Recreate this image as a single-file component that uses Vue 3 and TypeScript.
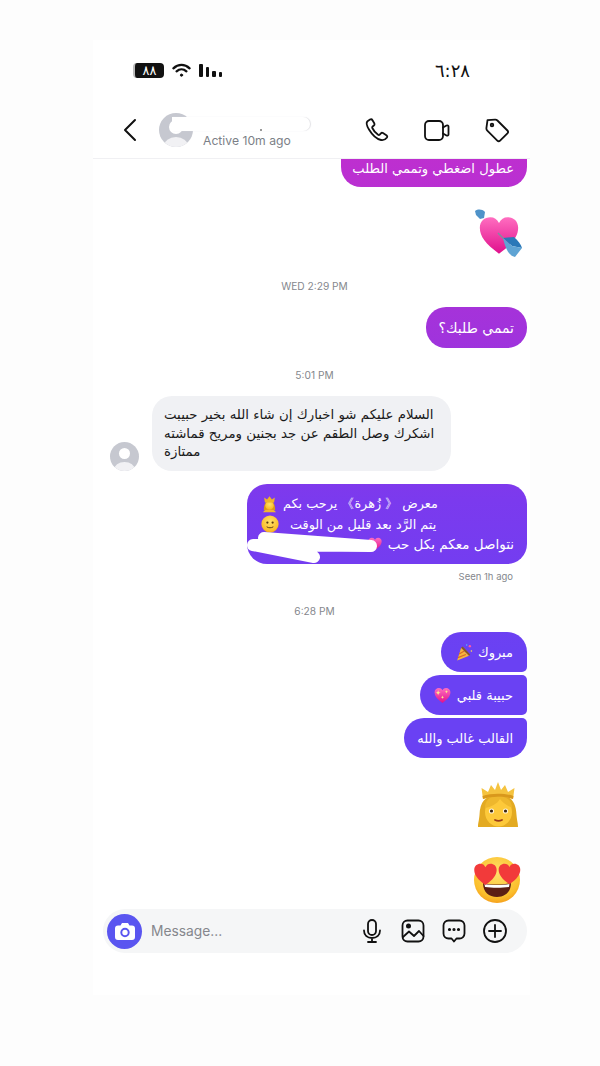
<script setup lang="ts">
const actions = ['call', 'video', 'tag']
const inputIcons = ['mic', 'image', 'chat', 'plus']
const heartPath = 'M24 43C10 33 4 25 4 16 4 9 9 5 15 5c4 0 7 2 9 6 2-4 5-6 9-6 6 0 11 4 11 11 0 9-6 17-20 27z'
</script>

<template>
  <div class="page">
    <svg class="defs" width="0" height="0">
      <defs>
        <linearGradient id="pink" x1="0" y1="0" x2="0" y2="1">
          <stop offset="0" stop-color="#ff6ec0" />
          <stop offset="1" stop-color="#e0108c" />
        </linearGradient>
        <radialGradient id="skin" cx="0.5" cy="0.35" r="0.75">
          <stop offset="0" stop-color="#ffe16a" />
          <stop offset="0.7" stop-color="#fbbf2c" />
          <stop offset="1" stop-color="#f28a12" />
        </radialGradient>
        <symbol id="heart" viewBox="0 0 48 48">
          <path :d="heartPath" fill="url(#pink)" />
        </symbol>
        <symbol id="face" viewBox="0 0 48 48">
          <circle cx="24" cy="24" r="23" fill="url(#skin)" />
        </symbol>
      </defs>
    </svg>

    <div class="screen">
      <div class="status">
        <div class="status-icons">
          <span class="battery">٨٨</span>
          <svg width="19" height="15" viewBox="0 0 20 15" fill="none" stroke="#111" stroke-width="2.4" stroke-linecap="round">
            <path d="M1.5 5.2c5-4.8 12-4.8 17 0" />
            <path d="M4.8 8.400c3-2.700 7.400-2.700 10.400 0" />
            <circle cx="10" cy="12.400" r="1.200" fill="#111" stroke-width="1" />
          </svg>
          <div class="signal"><i class="s1"></i><i class="s2"></i><i class="s3"></i><i class="s4"></i></div>
        </div>
        <span class="clock">٦:٢٨</span>
      </div>

      <header class="head">
        <svg class="back" width="16" height="24" viewBox="0 0 16 24" fill="none" stroke="#111" stroke-width="2" stroke-linecap="round" stroke-linejoin="round">
          <path d="M13 2 3 12l10 10" />
        </svg>
        <div class="who">
          <div class="avatar big"><i></i><b></b></div>
          <div class="name">
            <div class="scribble"></div>
            <div class="active">Active 10m ago</div>
          </div>
        </div>
        <div class="actions">
          <svg v-for="a in actions" :key="a" width="26" height="26" viewBox="0 0 26 26" fill="none" stroke="#111" stroke-width="1.800" stroke-linecap="round" stroke-linejoin="round">
            <path v-if="a === 'call'" d="M6 2.500 3.500 4.200C2 5.500 2.600 8.500 5 12.500c3 5 7.500 9.500 12 10.500 2.500.5 4.500-.5 6-2.500.5-.8.300-1.500-.3-2l-3.700-2.400c-.8-.5-1.500-.4-2.100.2l-1.200 1.400c-.5.500-1 .5-1.600.1-2.500-1.700-4.500-4-5.800-6.800-.3-.6-.2-1.100.3-1.500l1.300-1c.6-.5.8-1.200.5-2L8.500 3.200C8 2.300 7 2 6 2.500z" />
            <template v-else-if="a === 'video'">
              <rect x="1" y="4" width="18" height="19" rx="4" />
              <path d="M19 10.500 22.500 8.500c1-.5 2 0 2 1v8c0 1-1 1.500-2 1L19 16.500" />
            </template>
            <template v-else>
              <path d="M3.500 3.200 11 2.600c1-.1 1.700.2 2.400.9l10 10c.8.800.8 2 0 2.800l-7.300 7.300c-.8.800-2 .8-2.800 0l-10-10c-.7-.7-1-1.400-.9-2.400z" />
              <circle cx="8" cy="8" r="1.300" />
            </template>
          </svg>
        </div>
      </header>

      <main class="chat">
        <div class="bubble cut" dir="rtl">عطول اضغطي وتممي الطلب</div>

        <svg class="emoji heart-arrow" width="50" height="50" viewBox="0 0 50 50">
          <path d="M1 2C4 0 8 0 11 3L10 9 6 10 2 6z" fill="#4f93c9" />
          <use href="#heart" x="2" y="3.500" width="46" height="46" />
          <path d="M24 24 31 31" stroke="#7b8fa0" stroke-width="1.500" />
          <path d="M29 29 40 28C44 32 47 35 48 39L38 37z" fill="#2a78b8" />
          <path d="M29 29 38 37 48 39 41 48C36 47 32 42 29 29z" fill="#5fa4d4" />
        </svg>

        <div class="stamp first">WED 2:29 PM</div>
        <div class="bubble single" dir="rtl">تممي طلبك؟</div>

        <div class="stamp second">5:01 PM</div>
        <div class="incoming">
          <div class="avatar small"><i></i><b></b></div>
          <div class="grey" dir="rtl">السلام عليكم شو اخبارك إن شاء الله بخير حبيبت اشكرك وصل الطقم عن جد بجنين ومريح قماشته ممتازة</div>
        </div>

        <div class="bubble long" dir="rtl">
          <div class="line inset">
            معرض 《 زُهرة》 يرحب بكم
            <svg class="inline" width="17" height="17" viewBox="0 0 48 48">
              <path d="M8 40c0-14 4-26 16-26s16 12 16 26z" fill="#d99a1c" />
              <circle cx="24" cy="27" r="12" fill="url(#skin)" />
              <path d="M11 18 9 4l8 6 7-9 7 9 8-6-2 14z" fill="#f0b429" />
              <path d="M6 46c2-6 10-8 18-8s16 2 18 8z" fill="#f2b632" />
            </svg>
          </div>
          <div class="line inset">
            يتم الرَّد بعد قليل من الوقت
            <svg class="inline smile" width="18" height="18" viewBox="0 0 48 48">
              <use href="#face" width="48" height="48" />
              <circle cx="17" cy="20" r="3" fill="#5a3a10" />
              <circle cx="31" cy="20" r="3" fill="#5a3a10" />
              <path d="M16 32c5 3 11 3 16 0" stroke="#5a3a10" stroke-width="2.500" fill="none" stroke-linecap="round" />
            </svg>
          </div>
          <div class="line full">
            نتواصل معكم بكل حب
            <svg class="inline" width="16" height="16" viewBox="0 0 48 48"><use href="#heart" width="48" height="48" /></svg>
          </div>
          <svg class="redact" width="132" height="36" viewBox="0 0 132 36" fill="none" stroke="#fff" stroke-width="12" stroke-linecap="round" stroke-linejoin="round">
            <path d="M19 8 126 16 8 15 69 27" />
          </svg>
        </div>
        <div class="seen">Seen 1h ago</div>

        <div class="stamp third">6:28 PM</div>
        <div class="group">
          <div class="bubble stack one" dir="rtl">
            مبروك
            <svg class="inline" width="19" height="19" viewBox="0 0 48 48">
              <path d="M8 44 18 12l20 20z" fill="#f6b73c" />
              <path d="M13 28 26 20M10 37l20-8" stroke="#d9692a" stroke-width="3" />
              <path d="M18 12 38 32l3-3-19-20z" fill="#8a5a20" />
              <circle cx="40" cy="8" r="3" fill="#ff5aa5" />
              <circle cx="32" cy="5" r="2" fill="#4fb8ff" />
              <circle cx="44" cy="20" r="2" fill="#ffdf4f" />
            </svg>
          </div>
          <div class="bubble stack two" dir="rtl">
            حبيبة قلبي
            <svg class="inline" width="19" height="19" viewBox="0 0 48 48">
              <use href="#heart" width="48" height="48" />
              <path d="M13 10c1 5 2 6 7 7-5 1-6 2-7 7-1-5-2-6-7-7 5-1 6-2 7-7zM34 10c.700 3 1.500 4 4 4.500-2.500.5-3.300 1.500-4 4.500-.7-3-1.500-4-4-4.500 2.500-.5 3.300-1.500 4-4.500zM24 24c.700 3 1.500 4 4 4.500-2.500.5-3.300 1.500-4 4.500-.7-3-1.500-4-4-4.500 2.500-.5 3.300-1.500 4-4.500z" fill="#ffe98a" />
            </svg>
          </div>
          <div class="bubble stack three" dir="rtl">القالب غالب والله</div>
        </div>

        <svg class="emoji queen" width="44" height="48" viewBox="0 0 44 48">
          <path d="M1 45c0-4 1-6 1.500-12C3 20 8 13 21 13s18 7 18.500 20c.5 6 1.500 8 1.500 12z" fill="#e3aa22" />
          <ellipse cx="21.500" cy="30" rx="13.500" ry="14.500" fill="#fdc93a" />
          <path d="M8 26c6-1 12-4 15-9 2 3 6 6 12 9 0-7-5-12-14-12S8 19 8 26z" fill="#eeb72d" />
          <path d="M6 17 4.500 6 11 10l3-7 4 5 3-8 3 8 4-5 3 7 6.500-4L36 17c-9-3-21-3-30 0z" fill="#f5c33f" />
          <path d="M6 17c9-3 21-3 30 0l.5-3c-9-3-22-3-31 0z" fill="#d9981c" />
          <circle cx="14.500" cy="29" r="2.600" fill="#fff4d8" />
          <circle cx="28.500" cy="29" r="2.600" fill="#fff4d8" />
          <circle cx="14.500" cy="29" r="1.600" fill="#3a2510" />
          <circle cx="28.500" cy="29" r="1.600" fill="#3a2510" />
          <path d="M18 38c2.500 1.200 4.500 1.200 7 0" stroke="#9c3d18" stroke-width="1.800" fill="none" stroke-linecap="round" />
        </svg>

        <svg class="emoji eyes" width="48" height="48" viewBox="0 0 48 48">
          <use href="#face" width="48" height="48" />
          <path d="M10 27c8 2 20 2 28 0 0 9-6 14-14 14S10 36 10 27z" fill="#5c1f14" />
          <path d="M11.500 28c7 1.400 18 1.400 25 0l-.5 3c-7 1-17 1-24 0z" fill="#fff" />
          <path :d="heartPath" fill="#f23a3a" transform="translate(-1 5) scale(.56)" />
          <path :d="heartPath" fill="#f23a3a" transform="translate(23.500 5) scale(.54)" />
        </svg>
      </main>

      <footer class="composer">
        <div class="cam">
          <svg width="20" height="18" viewBox="0 0 20 18">
            <path d="M3 3.500h2.500L7 1h6l1.500 2.500H17a3 3 0 0 1 3 3V15a3 3 0 0 1-3 3H3a3 3 0 0 1-3-3V6.500a3 3 0 0 1 3-3z" fill="#fff" />
            <circle cx="10" cy="10.500" r="3.700" fill="none" stroke="#5a55f0" stroke-width="2" />
          </svg>
        </div>
        <span class="placeholder">Message...</span>
        <div class="tools">
          <svg v-for="t in inputIcons" :key="t" width="26" height="26" viewBox="0 0 26 26" fill="none" stroke="#111" stroke-width="1.800" stroke-linecap="round" stroke-linejoin="round">
            <template v-if="t === 'mic'">
              <rect x="9" y="2" width="8" height="15" rx="4" />
              <path d="M5 12.500c0 5 3.500 7.500 8 7.500s8-2.500 8-7.500M13 20v4M9 24h8" />
            </template>
            <template v-else-if="t === 'image'">
              <rect x="2.500" y="2.500" width="21" height="21" rx="5" />
              <circle cx="8.500" cy="8" r="1.600" fill="#111" />
              <path d="M3 19 9 13.500l5 4.500 5-5 4.500 5" />
            </template>
            <template v-else-if="t === 'chat'">
              <path d="M7.500 2.500h11a5 5 0 0 1 5 5v8a5 5 0 0 1-5 5h-3l-2.500 3-2.500-3h-3a5 5 0 0 1-5-5v-8a5 5 0 0 1 5-5z" />
              <circle cx="8.500" cy="11.500" r=".7" fill="#111" />
              <circle cx="13" cy="11.500" r=".7" fill="#111" />
              <circle cx="17.500" cy="11.500" r=".7" fill="#111" />
            </template>
            <template v-else>
              <circle cx="13" cy="13" r="11" />
              <path d="M13 7v12M7 13h12" />
            </template>
          </svg>
        </div>
      </footer>
    </div>
  </div>
</template>

<style>
body {
  background: #fdfdfd;
}
</style>

<style scoped>
.page {
  width: 600px;
  height: 1066px;
  padding: 40px 0 0 93px;
  box-sizing: border-box;
  overflow: hidden;
  font-family: "DejaVu Sans", "Noto Sans", sans-serif;
  color: #1a1a1a;
}

.defs {
  position: absolute;
}

.screen {
  width: 437px;
  height: 955px;
  background: #fff;
  display: flex;
  flex-direction: column;
}

.status {
  height: 61px;
  display: flex;
  align-items: center;
  justify-content: space-between;
  padding: 0 60px 0 40px;
}

.status-icons {
  display: flex;
  align-items: center;
  gap: 8px;
}

.battery {
  width: 29px;
  height: 15px;
  background: #111;
  color: #fff;
  border-radius: 4px;
  border-left: 2px solid #bbb;
  font-size: 13px;
  line-height: 15px;
  text-align: center;
}

.signal {
  display: flex;
  align-items: flex-end;
  gap: 3px;
  height: 13px;
}

.signal i {
  width: 3.500px;
  background: #111;
  border-radius: 1px;
}

.s1 { height: 13px; }
.s2 { height: 10px; }
.s3 { height: 6px; }
.s4 { height: 5px; }

.clock {
  font-size: 18px;
  color: #111;
}

.head {
  height: 58px;
  display: flex;
  align-items: center;
  border-bottom: 1px solid #f0f0f3;
  box-sizing: border-box;
  padding: 0 20px 0 29px;
}

.back {
  margin-right: 21px;
}

.who {
  display: flex;
  align-items: center;
  gap: 10px;
  flex: 1;
}

.avatar {
  border-radius: 50%;
  background: #c6c8d0;
  overflow: hidden;
  position: relative;
  flex: none;
}

.avatar i {
  position: absolute;
  background: #fff;
  border-radius: 50%;
}

.avatar b {
  position: absolute;
  background: #f1f1f4;
  border-radius: 50%;
}

.big {
  width: 34px;
  height: 34px;
}

.big i { left: 10px; top: 7px; width: 14px; height: 14px; }
.big b { left: 5px; top: 24px; width: 24px; height: 18px; }

.small {
  width: 29px;
  height: 29px;
}

.small i { left: 9px; top: 6px; width: 11px; height: 11px; }
.small b { left: 4px; top: 20px; width: 21px; height: 16px; }

.name {
  position: relative;
  padding-top: 5px;
}

.scribble {
  position: relative;
  height: 14px;
  width: 138px;
  margin-left: -31px;
  background: #fff;
  border-radius: 0 8px 8px 0;
  box-shadow: 1px 0 1px #e2e2e6;
}

.scribble::after {
  content: "";
  position: absolute;
  left: 88px;
  bottom: 0;
  width: 2px;
  height: 2px;
  border-radius: 50%;
  background: #777;
}

.active {
  font-family: Inter, "Liberation Sans", sans-serif;
  font-size: 12.200px;
  color: #7c7f87;
  margin-top: 2px;
}

.actions {
  display: flex;
  gap: 34px;
}

.chat {
  flex: 1;
  min-height: 0;
  overflow: hidden;
  display: flex;
  flex-direction: column;
  align-items: flex-end;
  padding: 0 3px 0 17px;
}

.bubble {
  color: #fff;
  font-size: 14px;
  background: linear-gradient(180deg, #bf2fcf 150px, #a033dc 340px, #7b3aee 500px, #6a41f3 650px) fixed;
  white-space: nowrap;
  box-sizing: border-box;
  display: flex;
  align-items: center;
  gap: 5px;
}

.cut {
  height: 28px;
  width: 186px;
  padding: 0 13px 10px;
  border-radius: 0 0 20px 20px;
  font-size: 13.100px;
}

.heart-arrow {
  margin: 22px 3px 0 0;
}

.emoji {
  flex: none;
}

.stamp {
  align-self: center;
  font-family: Inter, "Liberation Sans", sans-serif;
  font-size: 10.200px;
  color: #85878d;
  line-height: 14px;
  margin-left: -8px;
}

.first { margin-top: 20px; }
.second { margin-top: 20px; }
.third { margin-top: 21px; }

.single {
  margin-top: 14px;
  height: 41px;
  padding: 0 13px;
  border-radius: 20px;
}

.incoming {
  margin-top: 14px;
  align-self: flex-start;
  display: flex;
  align-items: flex-end;
  gap: 13px;
}

/* lines start on the left even though the script runs right to left */
.grey {
  width: 299px;
  height: 75px;
  box-sizing: border-box;
  background: #f0f1f4;
  border-radius: 20px;
  padding: 10px 12px;
  font-size: 13.350px;
  line-height: 18.500px;
  text-align: left;
  color: #1a1a1a;
}

.long {
  position: relative;
  margin-top: 13px;
  width: 280px;
  height: 80px;
  flex-direction: column;
  align-items: flex-end;
  justify-content: center;
  gap: 0;
  padding: 0 13px 0 14px;
  border-radius: 20px;
}

.line {
  height: 20px;
  display: flex;
  align-items: center;
  gap: 5px;
  font-size: 13.500px;
}

.inset {
  font-size: 12.800px;
}

.full {
  align-self: flex-start;
}

.inline {
  flex: none;
}

.smile {
  margin-right: 6px;
}

.redact {
  position: absolute;
  left: -2px;
  top: 46px;
  overflow: visible;
}

.seen {
  font-family: Inter, "Liberation Sans", sans-serif;
  font-size: 9.500px;
  color: #85878d;
  margin: 7px 14px 0 0;
  line-height: 12px;
}

.group {
  margin-top: 14px;
  display: flex;
  flex-direction: column;
  align-items: flex-end;
  gap: 3px;
}

.stack {
  height: 40px;
  padding: 0 14px 0 13px;
  font-size: 13px;
}

.one {
  border-radius: 20px 20px 5px 20px;
}

.two {
  border-radius: 20px 5px 5px 20px;
}

.three {
  border-radius: 20px 5px 20px 20px;
}

.queen {
  margin: 24px 6px 0 0;
}

.eyes {
  margin: 26px 6px 0 0;
}

.composer {
  margin: 0 3px 42px 10px;
  height: 44px;
  flex: none;
  background: #f5f6f7;
  border-radius: 22px;
  display: flex;
  align-items: center;
  padding: 0 19px 0 4px;
}

.cam {
  width: 35px;
  height: 35px;
  border-radius: 50%;
  background: #5a55f0;
  display: flex;
  align-items: center;
  justify-content: center;
}

.placeholder {
  font-family: Inter, "Liberation Sans", sans-serif;
  font-size: 13.800px;
  color: #85878d;
  margin-left: 9px;
  flex: 1;
}

.tools {
  display: flex;
  gap: 15px;
}
</style>
